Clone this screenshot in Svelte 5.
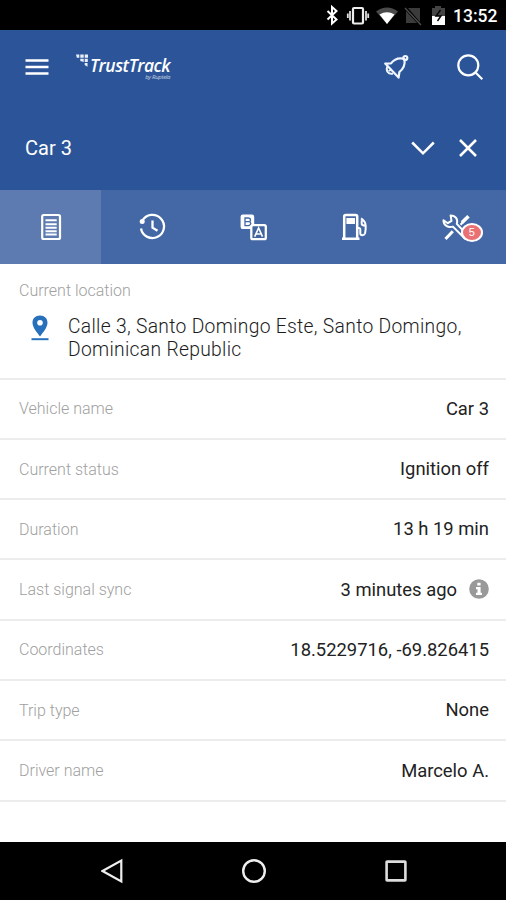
<script lang="ts">
	type Row = { label: string; value: string; info?: boolean };

	const rows: Row[] = [
		{ label: "Vehicle name", value: "Car 3" },
		{ label: "Current status", value: "Ignition off" },
		{ label: "Duration", value: "13 h 19 min" },
		{ label: "Last signal sync", value: "3 minutes ago", info: true },
		{ label: "Coordinates", value: "18.5229716, -69.826415" },
		{ label: "Trip type", value: "None" },
		{ label: "Driver name", value: "Marcelo A." },
	];

	const tabs = ["details", "history", "trips", "fuel", "service"];
	let active = $state("details");
</script>

<div class="screen">
	<div class="status-bar">
		<svg width="114" height="30" viewBox="332 0 114 30" aria-hidden="true">
			<path d="M327.5 11l9 8.5-4.5 4V7l4.5 4-9 8.5" fill="none" stroke="#fff" stroke-width="2" />
			<rect x="353" y="8" width="10" height="15.5" rx="1" fill="none" stroke="#eee" stroke-width="2.2" />
			<path d="M350 11v9.5M347.8 13.5v4.5M366 11v9.5M368.2 13.5v4.5" stroke="#ddd" stroke-width="1.8" />
			<path d="M376 11.5q11-8 22 0L387 24z" fill="#4a4a4a" />
			<path d="M379.5 14.5q7.5-4.5 15 0L387 24z" fill="#fff" />
			<path d="M408 8h12v14zM406 11v12h11z" fill="#3b3b3b" />
			<path d="M405 8l16 17" stroke="#4a4a4a" stroke-width="1.5" />
			<path d="M435 6h6v2h4v8h-13V8h3z" fill="#444" />
			<path d="M432 16h13v9h-13z" fill="#fff" />
			<path d="M440.5 10l-4.5 6h5l-3.5 5" fill="none" stroke="#000" stroke-width="1.4" />
		</svg>
		<span class="clock">13:52</span>
	</div>

	<header>
		<div class="top-row">
			<button class="menu" aria-label="Menu">
				<svg width="24" height="18" viewBox="0 0 24 18">
					<path d="M.5 2.5h23M.5 9h23M.5 15.5h23" stroke="#fff" stroke-width="2.5" />
				</svg>
			</button>
			<div class="logo">
				<svg width="13" height="13" viewBox="0 0 13 13" aria-hidden="true">
					<path d="M0 .6h3.3v3.2H.8zM4.3.4h3.4v3.4H4.3zM8.7.4H12v3.4H8.7zM4.3 4.7h3.4v3.2l-3.4-1zM8.7 4.7h3.1v3.4H8.7zM8.7 9h2.8v3.7L8.7 11z" fill="#e9effa" />
				</svg>
				<div class="wordmark">
					<span class="brand">TrustTrack</span>
					<span class="by">by Ruptela</span>
				</div>
			</div>
			<button class="bell" aria-label="Notifications">
				<svg width="26" height="26" viewBox="0 0 26 26" fill="none" stroke="#f0f6ff" stroke-width="2.2" stroke-linejoin="round">
					<path d="M2.2 9.6 15.6 23.6l.8-5.6c4.4-3.4 6-7.2 5-13.2-5.6-1.4-10.4.4-13.4 4.6z" />
					<path d="M4.2 12.5c-1.6 4.6 1.2 8 5.8 7M5.8 17l2.8-1.6" stroke-width="1.9" />
					<circle cx="22.3" cy="4" r="2" />
				</svg>
			</button>
			<button class="search" aria-label="Search">
				<svg width="28" height="28" viewBox="0 0 28 28" fill="none" stroke="#fff" stroke-width="2.2">
					<circle cx="12.3" cy="12.3" r="10" />
					<path d="M19.3 19.3l7 7" />
				</svg>
			</button>
		</div>
		<div class="vehicle-row">
			<h1>Car 3</h1>
			<button class="expand" aria-label="Expand">
				<svg width="24" height="16" viewBox="0 0 24 16">
					<path d="M1.2 2.5l10.8 10.8 10.8-10.8" fill="none" stroke="#fff" stroke-width="2.5" />
				</svg>
			</button>
			<button class="close" aria-label="Close">
				<svg width="20" height="20" viewBox="0 0 20 20">
					<path d="M2 2l16 16M18 2l-16 16" stroke="#fff" stroke-width="2.5" />
				</svg>
			</button>
		</div>
	</header>

	<nav class="tabs">
		{#each tabs as tab}
			<button class:active={active === tab} aria-label={tab} onclick={() => (active = tab)}>
				{#if tab === "details"}
					<svg width="30" height="30" viewBox="0 0 30 30" fill="none" stroke="#fff">
						<rect x="6.2" y="3" width="17.8" height="24" rx="1.5" stroke-width="2.2" />
						<path d="M9.5 8.3h11.2M9.5 12.2h11.2M9.5 15.8h11.2M9.5 19.2h11.2M9.5 22.6h11.2" stroke-width="2" />
					</svg>
				{:else if tab === "history"}
					<svg width="30" height="30" viewBox="0 0 30 30" fill="none" stroke="#fff" stroke-width="2.3">
						<path d="M5.3 8.8A11.6 11.6 0 1 1 4 16.5" />
						<path d="M15.5 8.5v7.2l5 3" />
						<circle cx="5.2" cy="9.4" r="2.5" fill="#fff" stroke="none" />
					</svg>
				{:else if tab === "trips"}
					<svg width="30" height="30" viewBox="0 0 30 30">
						<rect x="2.6" y="2.6" width="13.6" height="14.5" rx="2.2" fill="#fff" />
						<path d="M7 6v7.6h3.2q2.6 0 2.6-2 0-1.5-1.5-1.9 1.2-.5 1.2-1.7 0-2-2.5-2zM7 9.7h4" fill="none" stroke="#4368a5" stroke-width="1.3" />
						<rect x="13.3" y="13.2" width="14.5" height="14" rx="1.5" fill="#42659f" stroke="#fff" stroke-width="2.3" />
						<path d="M16.7 24.7l3.9-8.7 3.9 8.7M18 22h5" fill="none" stroke="#fff" stroke-width="1.6" />
					</svg>
				{:else if tab === "fuel"}
					<svg width="30" height="30" viewBox="0 0 30 30" fill="none" stroke="#fff" stroke-width="2">
						<path d="M5.2 26.5V4.5q0-1.5 1.5-1.5h10q1.5 0 1.5 1.5v22M3 26.7h17.5" stroke-width="2.5" />
						<path d="M7.4 6h8.6v6H7.4z" fill="#fff" stroke="none" />
						<path d="M18.5 16h1.6q1.2 0 1.2 1.5v3.8q0 2 2 2t2.7-1.8q.8-3.2.7-7.5-.1-5-4.7-7.7M22.7 8.2v3.5q0 1.8 3.3 1.8" stroke-width="2" />
					</svg>
				{:else}
					<span class="service">
						<svg width="30" height="30" viewBox="0 0 30 30" fill="none" stroke="#fff" stroke-linejoin="round">
							<path d="M1.5 8.2l4.3 3 3.7-2.4L8.6 3.4c5 .1 7.6 3.8 6.2 8.5l11 11.6-3 3-11.9-11.9C6.2 16 1.3 13.5 1.5 8.2z" stroke-width="2" />
							<path d="M3.5 27l7.3-7.8" stroke-width="3" />
							<path d="M18.5 12.7l3-3.2" stroke-width="2.2" />
							<path d="M20 10.5l6.5-6.3" stroke-width="3.6" />
						</svg>
						<span class="badge">5</span>
					</span>
				{/if}
			</button>
		{/each}
	</nav>

	<main>
		<section class="location">
			<div class="label">Current location</div>
			<div class="address">
				<svg width="18" height="26" viewBox="0 0 18 26" aria-hidden="true">
					<path d="M9 .5C4.5.5 1.5 3.5 1.5 7.7c0 4.7 4.6 9.8 7.5 13.8 2.9-4 7.5-9.1 7.5-13.8C16.5 3.5 13.5.5 9 .5z" fill="#2770bc" />
					<circle cx="9" cy="7.8" r="2.8" fill="#fff" />
					<path d="M.5 24.2h17" stroke="#2770bc" stroke-width="2" />
				</svg>
				<p>Calle 3, Santo Domingo Este, Santo Domingo,<br />Dominican Republic</p>
			</div>
		</section>
		{#each rows as row}
			<div class="row">
				<span class="label">{row.label}</span>
				<span class="value">{row.value}</span>
				{#if row.info}
					<svg class="info" width="20" height="20" viewBox="0 0 20 20" aria-hidden="true">
						<circle cx="10" cy="10" r="9.8" fill="#999" />
						<path d="M8.3 3.7h3.3v2.7H8.3zM7 8h4.6v5.8H13V16H7v-2.2h1.5v-3.6H7z" fill="#fff" />
					</svg>
				{/if}
			</div>
		{/each}
	</main>

	<footer>
		<svg width="22" height="26" viewBox="0 0 22 26"><path d="M1.5 13l18.8-10.4v20.8z" fill="none" stroke="#eee" stroke-width="2.2" /></svg>
		<svg width="26" height="26" viewBox="0 0 26 26"><circle cx="13" cy="13" r="10.8" fill="none" stroke="#eee" stroke-width="2.4" /></svg>
		<svg width="22" height="26" viewBox="0 0 22 26"><rect x="1.6" y="3.6" width="18.8" height="18.8" rx=".5" fill="none" stroke="#ddd" stroke-width="2.6" /></svg>
	</footer>
</div>

<style>
	:global(body) {
		overflow: hidden;
	}

	.screen {
		display: flex;
		flex-direction: column;
		width: 506px;
		height: 900px;
		overflow: hidden;
		background: #fff;
		font-family: Roboto, "Liberation Sans", sans-serif;
	}

	svg {
		display: block;
		flex: none;
	}

	button {
		display: flex;
		align-items: center;
		justify-content: center;
		padding: 0;
		border: 0;
		background: none;
	}

	.status-bar {
		display: flex;
		align-items: center;
		justify-content: flex-end;
		height: 30px;
		flex: none;
		padding-right: 9px;
		background: #000;
		color: #fff;
	}

	.status-bar svg {
		overflow: visible;
	}

	.clock {
		width: 44px;
		margin-left: 7px;
		font-size: 17.5px;
		font-weight: 500;
		line-height: 30px;
		padding-top: 1px;
	}

	header {
		height: 160px;
		flex: none;
		background: #2c5599;
		color: #fff;
	}

	.top-row {
		display: flex;
		align-items: center;
		height: 74px;
		padding: 0 22px 0 25px;
	}

	.logo {
		display: flex;
		margin-left: 27px;
		height: 26px;
	}

	.wordmark {
		display: flex;
		flex-direction: column;
		margin-left: 1px;
		font-family: "Open Sans", sans-serif;
		font-style: italic;
	}

	.brand {
		padding-top: 3px;
		font-size: 17.5px;
		font-weight: 600;
		line-height: 17px;
		letter-spacing: -0.45px;
	}

	.by {
		align-self: flex-end;
		font-size: 6px;
		line-height: 6px;
		letter-spacing: -0.3px;
		opacity: 0.7;
	}

	.bell {
		margin-left: auto;
	}

	.search {
		margin-left: 47px;
	}

	.vehicle-row {
		display: flex;
		align-items: center;
		height: 87px;
		padding: 0 28px 0 25px;
	}

	h1 {
		margin: 0;
		font-size: 20px;
		font-weight: 400;
	}

	.expand {
		margin-left: auto;
	}

	.close {
		margin-left: 23px;
	}

	.tabs {
		display: grid;
		grid-template-columns: repeat(5, 1fr);
		height: 74px;
		flex: none;
		background: #4368a5;
	}

	.tabs .active {
		background: #5d7bb1;
	}

	.service {
		position: relative;
		margin-left: 3px;
	}

	.badge {
		position: absolute;
		left: 19px;
		top: 11px;
		box-sizing: border-box;
		width: 22px;
		height: 19px;
		border: 2px solid #fff;
		border-radius: 50%;
		background: #e97174;
		color: #fff;
		font-size: 11px;
		font-weight: 500;
		line-height: 15px;
		text-align: center;
	}

	main {
		flex: 1;
	}

	.location {
		box-sizing: border-box;
		height: 115.6px;
		padding: 16.5px 17px 0 19px;
		border-bottom: 2px solid #ececec;
	}

	.label {
		color: #a0a0a0;
		font-size: 16px;
		font-weight: 300;
		line-height: 20px;
	}

	.address {
		display: flex;
		margin-top: 14px;
		padding-left: 12px;
	}

	.address p {
		margin: 0 0 0 19px;
		color: #1c1c1c;
		font-size: 19.3px;
		font-weight: 300;
		line-height: 23px;
		letter-spacing: 0.3px;
		white-space: nowrap;
	}

	.row {
		display: flex;
		align-items: center;
		box-sizing: border-box;
		height: 60.3px;
		padding: 1px 17px 0 19px;
		border-bottom: 2px solid #ececec;
	}

	.value {
		margin: -2px 0 0 auto;
		color: #222;
		font-size: 18.4px;
	}

	.info {
		margin: -2px 0 0 12px;
	}

	footer {
		display: flex;
		align-items: center;
		justify-content: space-between;
		box-sizing: border-box;
		height: 58px;
		flex: none;
		padding: 0 99px 0 101px;
		background: #000;
	}
</style>
